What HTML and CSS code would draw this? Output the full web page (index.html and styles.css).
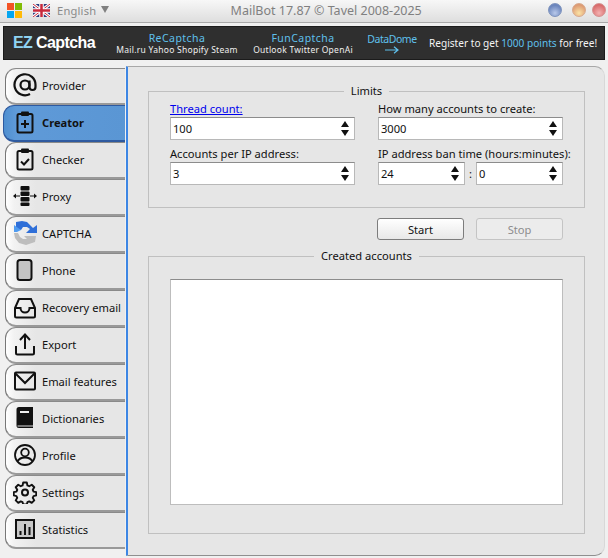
FILE: index.html
```html
<!DOCTYPE html>
<html lang="en">
<head>
<meta charset="utf-8">
<title>MailBot</title>
<link rel="stylesheet" href="styles.css">
</head>
<body>
<div class="window">
  <header class="titlebar">
    <div class="title-left">
      <svg class="ms-logo" width="15" height="15" viewBox="0 0 15 15"><rect width="7" height="7" fill="#f35325"/><rect x="8" width="7" height="7" fill="#81bc06"/><rect y="8" width="7" height="7" fill="#05a6f0"/><rect x="8" y="8" width="7" height="7" fill="#ffba08"/></svg>
      <svg class="flag" width="17" height="13" viewBox="0 0 17 13"><rect width="17" height="13" fill="#2b3a7c"/><path d="M0 0L17 13M17 0L0 13" stroke="#fff" stroke-width="3"/><path d="M0 0L17 13M17 0L0 13" stroke="#c8283c" stroke-width="1"/><path d="M8.5 0V13M0 6.5H17" stroke="#fff" stroke-width="4.5"/><path d="M8.5 0V13M0 6.5H17" stroke="#c8283c" stroke-width="2.5"/></svg>
      <span class="lang">English</span>
      <svg class="lang-caret" width="8" height="8" viewBox="0 0 8 8"><path d="M0 1H8L4 8Z" fill="#808080"/></svg>
    </div>
    <div class="app-title">MailBot 17.87 © Tavel 2008-2025</div>
    <div class="win-buttons">
      <span class="dot dot-blue"></span>
      <span class="dot dot-yellow"></span>
      <span class="dot dot-red"></span>
    </div>
  </header>

  <section class="banner">
    <div class="brand"><span class="brand-ez">EZ</span> Captcha</div>
    <div class="promo promo-re"><span class="promo-head">ReCaptcha</span><span class="promo-sub">Mail.ru Yahoo Shopify Steam</span></div>
    <div class="promo promo-fun"><span class="promo-head">FunCaptcha</span><span class="promo-sub">Outlook Twitter OpenAi</span></div>
    <div class="promo promo-data"><span class="promo-head promo-head-tight">DataDome</span>
      <svg width="14" height="8" viewBox="0 0 14 8"><path d="M0 4H13M9 .8L13 4L9 7.2" fill="none" stroke="#5fc0ec" stroke-width="1.2"/></svg>
    </div>
    <div class="register">Register to get <span class="register-hl">1000 points</span> for free!</div>
  </section>

  <div class="main">
    <nav class="tabs">
      <a class="tab"><svg class="icon" viewBox="0 0 24 24"><circle cx="12" cy="12" r="4.5" fill="none" stroke="#111" stroke-width="2.2"/><path d="M16.5 7.5V14a3 3 0 0 0 6 0v-2A10.5 10.5 0 1 0 17 21" fill="none" stroke="#111" stroke-width="2.2"/></svg><span>Provider</span></a>
      <a class="tab tab-active"><svg class="icon" viewBox="0 0 24 24"><rect x="4.5" y="4" width="15" height="18.500" rx="1.500" fill="none" stroke="#111" stroke-width="2"/><rect x="8" y="1.500" width="8" height="4.500" rx="1" fill="#111"/><path d="M12 10v8M8 14h8" stroke="#111" stroke-width="2"/></svg><span>Creator</span></a>
      <a class="tab"><svg class="icon" viewBox="0 0 24 24"><rect x="4.500" y="4" width="15" height="18.500" rx="1.500" fill="none" stroke="#111" stroke-width="2"/><rect x="8" y="1.500" width="8" height="4.500" rx="1" fill="#111"/><path d="M8 14.500l3 3 5-5.500" fill="none" stroke="#111" stroke-width="2"/></svg><span>Checker</span></a>
      <a class="tab"><svg class="icon" viewBox="0 0 24 24"><rect x="7.500" y="2" width="9" height="4.500" rx="1" fill="#111"/><rect x="7.500" y="7.500" width="9" height="4.500" rx="1" fill="#111"/><rect x="7.500" y="13" width="9" height="4.500" rx="1" fill="#111"/><rect x="7.500" y="18.500" width="9" height="3.500" rx="1" fill="#111"/><path d="M1 12h6M17 12h6" stroke="#111" stroke-width="1"/><path d="M0 12l3-2.500v5zM24 12l-3-2.500v5z" fill="#111"/></svg><span>Proxy</span></a>
      <a class="tab"><svg class="icon" viewBox="0 0 24 24"><path d="M3 1L9 0 14 1 20 7l4-3v8H13l4-4-3-2-4 0-2 3-5-1z" fill="#2f6fd8"/><path d="M1 4L8 9 4 11H1z" fill="#4f9bf0"/><path d="M1 12l4 0 2 4 3 2 4 0-3-3h12l-1 6-3 1-6 2-7-2-4-5z" fill="#bdbdbd"/></svg><span>CAPTCHA</span></a>
      <a class="tab"><svg class="icon" viewBox="0 0 24 24"><rect x="4.500" y="2" width="14" height="20" rx="2.500" fill="#c4c4c4" stroke="#111" stroke-width="2"/></svg><span>Phone</span></a>
      <a class="tab"><svg class="icon" viewBox="0 0 24 24"><path d="M2 21V13L6 4h12l4 9v8a1.500 1.500 0 0 1-1.500 1.500h-17A1.500 1.500 0 0 1 2 21z" fill="none" stroke="#111" stroke-width="2"/><path d="M2 13h5.500a4.500 4.500 0 0 0 9 0H22" fill="none" stroke="#111" stroke-width="2"/></svg><span>Recovery email</span></a>
      <a class="tab"><svg class="icon" viewBox="0 0 24 24"><path d="M12 17V3M7 8l5-5.500L17 8" fill="none" stroke="#111" stroke-width="2"/><path d="M3 14v7a1.500 1.500 0 0 0 1.500 1.500h15A1.500 1.500 0 0 0 21 21v-7" fill="none" stroke="#111" stroke-width="2"/></svg><span>Export</span></a>
      <a class="tab"><svg class="icon" viewBox="0 0 24 24"><rect x="2" y="3.500" width="20" height="17" rx="1" fill="none" stroke="#111" stroke-width="2"/><path d="M2 4l10 10L22 4" fill="none" stroke="#111" stroke-width="2"/></svg><span>Email features</span></a>
      <a class="tab"><svg class="icon" viewBox="0 0 24 24"><path d="M6 1h14v21H6a2.500 2.500 0 0 1-2.500-2.500V3.500A2.500 2.500 0 0 1 6 1z" fill="#111"/><rect x="7" y="5" width="9" height="2" fill="#eee"/><rect x="4.500" y="19.500" width="15.500" height="1" fill="#ddd"/></svg><span>Dictionaries</span></a>
      <a class="tab"><svg class="icon" viewBox="0 0 24 24"><circle cx="12" cy="12" r="10" fill="none" stroke="#111" stroke-width="1.800"/><circle cx="12" cy="9.500" r="3.800" fill="none" stroke="#111" stroke-width="1.800"/><path d="M4.500 18.500c1.500-3 4-4 7.500-4s6 1 7.500 4" fill="none" stroke="#111" stroke-width="1.800"/></svg><span>Profile</span></a>
      <a class="tab"><svg class="icon" viewBox="0 0 24 24"><path d="M10 1.500h4l.7 3.200 2 .9 2.800-1.700 2.800 2.800-1.700 2.800.9 2 3 .7v3.600l-3 .7-.9 2 1.700 2.800-2.800 2.800-2.800-1.700-2 .9-.7 2.400h-4l-.7-2.400-2-.9-2.800 1.700-2.800-2.800 1.700-2.800-.9-2-3-.7v-3.600l3-.7.9-2-1.700-2.800 2.800-2.800 2.800 1.700 2-.9z" transform="translate(1.200 1.200) scale(.9)" fill="none" stroke="#111" stroke-width="2.100" stroke-linejoin="round"/><circle cx="12" cy="12.500" r="3" fill="none" stroke="#111" stroke-width="2"/></svg><span>Settings</span></a>
      <a class="tab"><svg class="icon" viewBox="0 0 24 24"><rect x="3" y="3" width="18" height="18" fill="#c8c8c8" stroke="#111" stroke-width="2"/><path d="M7.500 18v-4M12 18V7M16.500 18v-8" stroke="#111" stroke-width="2"/></svg><span>Statistics</span></a>
    </nav>

    <main class="panel">
      <fieldset class="group group-limits">
        <legend>Limits</legend>
        <div class="limits-grid">
          <div class="field">
            <label class="link">Thread count:</label>
            <div class="spin"><span class="spin-value">100</span><span class="arrows"></span></div>
          </div>
          <div class="field">
            <label>How many accounts to create:</label>
            <div class="spin"><span class="spin-value">3000</span><span class="arrows"></span></div>
          </div>
          <div class="field">
            <label>Accounts per IP address:</label>
            <div class="spin"><span class="spin-value">3</span><span class="arrows"></span></div>
          </div>
          <div class="field">
            <label>IP address ban time (hours:minutes):</label>
            <div class="time-row">
              <div class="spin"><span class="spin-value">24</span><span class="arrows"></span></div>
              <span class="colon">:</span>
              <div class="spin"><span class="spin-value">0</span><span class="arrows"></span></div>
            </div>
          </div>
        </div>
      </fieldset>

      <div class="actions">
        <button class="btn" type="button">Start</button>
        <button class="btn btn-disabled" type="button">Stop</button>
      </div>

      <fieldset class="group group-created">
        <legend>Created accounts</legend>
        <div class="listbox"></div>
      </fieldset>
    </main>
  </div>
</div>
</body>
</html>
```

FILE: styles.css
```css
* { box-sizing: border-box; }
html, body { margin: 0; padding: 0; }
body {
  width: 608px;
  height: 558px;
  overflow: hidden;
  background: #f0f0f0;
  font-family: "Noto Sans", sans-serif;
  font-size: 11.15px;
  color: #111;
}
.window { display: flex; flex-direction: column; height: 558px; }

.titlebar {
  height: 23px;
  display: flex;
  align-items: center;
  position: relative;
  padding: 0 2px 2px 7px;
  background: linear-gradient(#f7f7f7, #dedede);
  border-bottom: 1px solid #a9a9a9;
  flex: none;
}
.title-left { display: flex; align-items: center; }
.flag { margin-left: 11px; }
.lang { margin-left: 7px; color: #8a8a8a; letter-spacing: .2px; }
.lang-caret { margin: -2px 0 0 5px; }
.app-title {
  flex: 1;
  margin: 0 0 0 -5px;
  text-align: center;
  color: #808080;
  font-size: 12.5px;
}
.win-buttons { display: flex; align-items: center; gap: 10px; }
.dot { width: 14px; height: 14px; border-radius: 50%; }
.dot-blue { background: radial-gradient(circle at 50% 75%, #b8c8ea, #6c86bd 70%); border: 1px solid #7d92bd; }
.dot-yellow { background: radial-gradient(circle at 50% 75%, #fbe3a5, #dd9a73 75%); border: 1px solid #d8a98c; margin-right: -4px; }
.dot-red { background: radial-gradient(circle at 50% 75%, #f3b1b1, #d86a6a 75%); border: 1px solid #d49090; }

.banner {
  flex: none;
  height: 34px;
  margin: 3px 3px 0 3px;
  display: flex;
  align-items: center;
  background: #2f2f2f;
  border: 1px solid #1b1b1b;
  color: #fff;
  position: relative;
}
.brand {
  width: 103px;
  padding-left: 9px;
  font-family: "Liberation Sans", sans-serif;
  font-weight: 700;
  font-size: 16px;
  letter-spacing: -.6px;
  white-space: nowrap;
}
.brand-ez { color: #8fd3f2; }
.promo { display: flex; flex-direction: column; align-items: center; line-height: 11px; }
.promo-re { width: 140px; }
.promo-fun { width: 112px; }
.promo-data { width: 66px; }
.promo-head { color: #5fc0ec; font-size: 10.5px; letter-spacing: .45px; line-height: 13px; }
.promo-head-tight { letter-spacing: -.45px; }
.promo-sub { font-size: 8.5px; letter-spacing: .27px; color: #f0f0f0; line-height: 10px; }
.register { font-size: 10.1px; white-space: nowrap; margin-left: 3px; padding-left: 1px; color: #f4f4f4; }
.register-hl { color: #5fc0ec; }

.main { flex: 1; display: flex; padding-top: 6px; min-height: 0; }
.tabs {
  width: 126px;
  flex: none;
  padding: 2px 1px 0 5px;
  display: flex;
  flex-direction: column;
}
.tab {
  height: 37px;
  flex: none;
  display: flex;
  align-items: center;
  padding: 0 0 2px 7px;
  gap: 5px;
  background: linear-gradient(90deg, #fff 0, #f2f2f2 8px, #e6e6e6 30px);
  border: 1px solid #8a8a8a;
  border-right: 0;
  border-bottom: 2px solid #999;
  border-left-color: #777;
  border-radius: 11px 0 0 11px;
}
.tab-active {
  margin-left: -2px;
  padding-left: 9px;
  background: linear-gradient(90deg, #4f8fd0 0, #5f9ad8 12px, #5a96d4 100%);
  border-color: #2e5aa0;
  font-weight: 700;
}
.icon { width: 24px; height: 24px; flex: none; }

.panel {
  flex: 1;
  margin: 0 3px 2px 0;
  padding: 16px 19px 0 20px;
  background: #e6e6e6;
  border: 1px solid #8f8f8f;
  border-left: 2px solid #3d86e4;
  border-right-color: #d8d8d8;
  border-top-color: #a8a8a8;
  border-radius: 0 10px 10px 0;
  display: flex;
  flex-direction: column;
}
.group {
  margin: 0;
  border: 1px solid #c0c0c0;
  min-width: 0;
}
.group legend {
  margin: 0 auto;
  padding: 0 7px;
  line-height: 16px;
  color: #111;
}
.group-limits { padding: 2px 21px 0 21px; height: 125px; flex: none; }
.limits-grid {
  display: grid;
  grid-template-columns: 185px 185px;
  column-gap: 23px;
  row-gap: 6px;
}
.field label { display: block; height: 16px; line-height: 16px; white-space: nowrap; }
.field .link { color: #0000ee; text-decoration: underline; }
.spin {
  flex: 1;
  height: 23px;
  background: #fff;
  border: 1px solid #b8b8b8;
  border-top-color: #8c8c8c;
  display: flex;
  align-items: center;
  padding: 0 5px 0 2px;
  justify-content: space-between;
}
.arrows { width: 8px; height: 17px; position: relative; }
.arrows::before, .arrows::after {
  content: "";
  position: absolute;
  left: 0;
  border-left: 4px solid transparent;
  border-right: 4px solid transparent;
}
.arrows::before { top: 1px; border-bottom: 6px solid #111; }
.arrows::after { bottom: 1px; border-top: 6px solid #111; }
.time-row { display: flex; align-items: center; }
.colon { width: 11px; text-align: center; }
.actions {
  display: flex;
  justify-content: flex-end;
  gap: 12px;
  padding-right: 22px;
  margin-top: 10px;
  flex: none;
}
.btn {
  width: 87px;
  height: 22px;
  padding: 0;
  font: inherit;
  color: #111;
  background: linear-gradient(#fff, #e8e8e8);
  border: 1px solid #7d7d7d;
  border-radius: 3px;
}
.btn-disabled { color: #8c8c8c; background: #ececec; border-color: #c4c4c4; }
.group-created { margin-top: 8px; padding: 15px 21px 0 21px; height: 286px; flex: none; }
.listbox {
  height: 226px;
  background: #fff;
  border: 1px solid #bdbdbd;
  border-top-color: #8c8c8c;
}
```
